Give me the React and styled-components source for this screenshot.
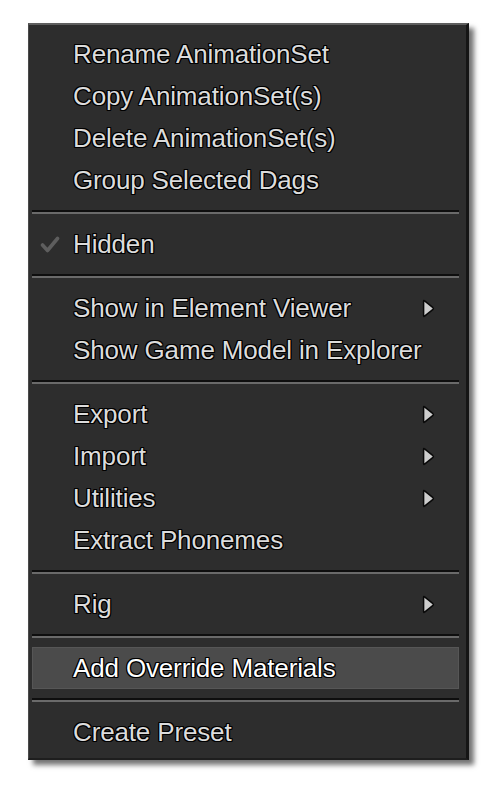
import styled, { createGlobalStyle } from 'styled-components';

const GlobalStyle = createGlobalStyle`
  html, body {
    margin: 0;
    padding: 0;
    background: #ffffff;
  }
`;

const groups = [
  [
    { label: 'Rename AnimationSet' },
    { label: 'Copy AnimationSet(s)' },
    { label: 'Delete AnimationSet(s)' },
    { label: 'Group Selected Dags' }
  ],
  [{ label: 'Hidden', checked: true }],
  [
    { label: 'Show in Element Viewer', submenu: true },
    { label: 'Show Game Model in Explorer' }
  ],
  [
    { label: 'Export', submenu: true },
    { label: 'Import', submenu: true },
    { label: 'Utilities', submenu: true },
    { label: 'Extract Phonemes' }
  ],
  [{ label: 'Rig', submenu: true }],
  [{ label: 'Add Override Materials', active: true }],
  [{ label: 'Create Preset' }]
];

const CheckIcon = () => (
  <svg width="20" height="17" viewBox="0 0 20 17">
    <path d="M2.5 9 L7.5 14.5 L17.5 2.5" fill="none" stroke="#5e5e5e" strokeWidth="3.6" strokeLinecap="round" strokeLinejoin="round" />
  </svg>
);

const ArrowIcon = () => (
  <svg width="13" height="19" viewBox="0 0 13 19">
    <path d="M1.6 2.2 Q1.6 1.1 2.6 1.8 L11 8.6 Q11.7 9.5 11 10.4 L2.6 17.2 Q1.6 17.9 1.6 16.8 Z" fill="#cdcdcd" stroke="#080808" strokeWidth="1.5" strokeLinejoin="round" />
  </svg>
);

const ContextMenu = () => (
  <Menu>
    {groups.map((group, gi) => (
      <Group key={gi}>
        {gi > 0 && <Separator />}
        {group.map(item => (
          <Item key={item.label} $active={item.active}>
            <CheckSlot>{item.checked && <CheckIcon />}</CheckSlot>
            <Label $active={item.active}>{item.label}</Label>
            <ArrowSlot>{item.submenu && <ArrowIcon />}</ArrowSlot>
          </Item>
        ))}
      </Group>
    ))}
  </Menu>
);

export default function App() {
  return (
    <Page>
      <GlobalStyle />
      <ContextMenu />
    </Page>
  );
}

const Page = styled.div`
  padding: 23px 0 0 28px;
  width: 500px;
  height: 785px;
  box-sizing: border-box;
`;

const Menu = styled.div`
  width: 441px;
  box-sizing: border-box;
  background: #2d2d2d;
  border-top: 2px solid #5e5e5e;
  border-left: 1px solid #4a4a4a;
  border-right: 3px solid #151515;
  border-bottom: 2px solid #1e1e1e;
  padding: 8px 7px 5px 3px;
  box-shadow: 5px 5px 5px rgba(0, 0, 0, 0.55);
  font-family: 'Liberation Sans', Arial, sans-serif;
`;

const Group = styled.div`
  display: flex;
  flex-direction: column;
`;

const Separator = styled.div`
  height: 22px;
  display: flex;
  flex-direction: column;
  justify-content: center;

  &::before {
    content: '';
    height: 2px;
    background: #0e0e0e;
  }

  &::after {
    content: '';
    height: 2px;
    background: #6a6a6a;
  }
`;

const Item = styled.div`
  height: 42px;
  box-sizing: border-box;
  display: flex;
  align-items: center;
  background: ${p => (p.$active ? '#4b4b4b' : 'transparent')};
  border: 1px solid ${p => (p.$active ? '#565656' : 'transparent')};
`;

const CheckSlot = styled.div`
  width: 40px;
  flex-shrink: 0;
  box-sizing: border-box;
  display: flex;
  justify-content: flex-start;
  padding-left: 7px;

  svg {
    display: block;
  }
`;

const Label = styled.span`
  flex: 1;
  font-size: 26px;
  letter-spacing: -0.15px;
  color: ${p => (p.$active ? '#ffffff' : '#dcdcdc')};
  text-shadow:
    1px 0 0 #000,
    -1px 0 0 #000,
    0 1px 0 #000,
    0 -1px 0 #000,
    1px 1px 0 #000,
    -1px -1px 0 #000,
    1px -1px 0 #000,
    -1px 1px 0 #000;
  white-space: nowrap;
`;

const ArrowSlot = styled.div`
  width: 36px;
  flex-shrink: 0;
  display: flex;
  justify-content: flex-start;
  align-items: center;

  svg {
    display: block;
  }
`;
